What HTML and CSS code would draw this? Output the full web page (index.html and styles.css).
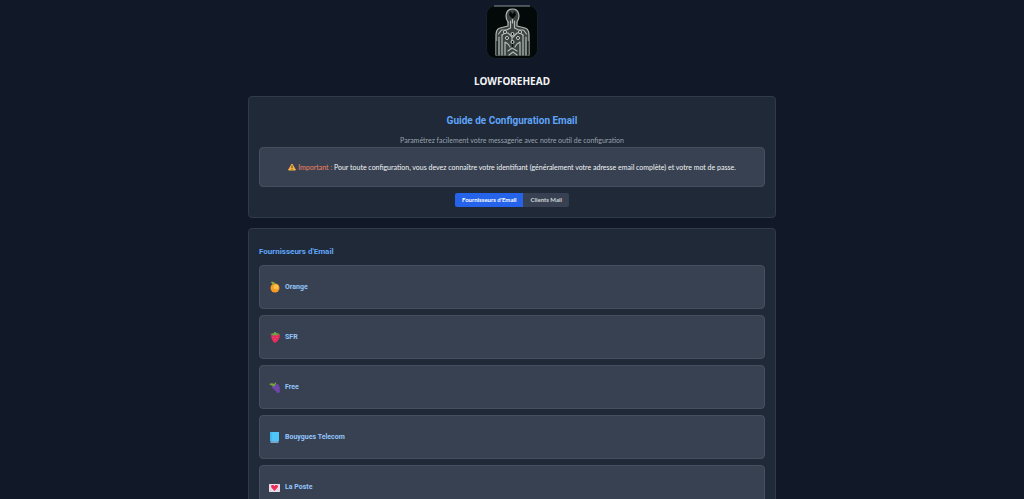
FILE: index.html
```html
<!DOCTYPE html>
<html lang="fr">
<head>
    <meta charset="UTF-8">
    <meta name="viewport" content="width=device-width, initial-scale=1.0">
    <title>Guide de Configuration Email</title>
    <link rel="stylesheet" href="styles.css">
</head>
<body>
    <!-- Header -->
    <header class="header">
        <svg class="logo" viewBox="0 0 52 54" role="img" aria-label="Logo Lowforehead">
            <rect x="0.5" y="0.5" width="51" height="53" rx="9" fill="#020908" stroke="#17212a"/>
            <path d="M8 1h36" stroke="#87929a"/>
            <path d="M22 17c-3-4-3-13 4.500-13s7.500 9 4.500 13v4l8 2c4 1 4 5 4 9v19H10V32c0-4 0-8 4-9l8-2z" fill="#3b4340"/>
            <g fill="none" stroke="#b4bab7" stroke-width="1.200" stroke-linecap="round" stroke-linejoin="round">
                <path d="M22 17c-3-4-3-13 4.500-13s7.500 9 4.500 13v4l8 2c4 1 4 5 4 9v18"/>
                <path d="M22 17v4l-8 2c-4 1-4 5-4 9v18"/>
                <path d="M26.500 12v6M24.500 16v7l-4 2h-5l-3 4M28.500 16v7l4 2h5l3 4"/>
                <path d="M13 32v18M16 30v20M40 32v18M37 30v20"/>
                <path d="M16 30l3-2h3l4 4v5M37 30l-3-2h-3l-4 4"/>
                <path d="M19 50V37l3 2 2 3M34 50V37l-3 2-2 3M22 46l4-3 5 3M23 50l4-3 4 3"/>
            </g>
            <path d="M24 6l2.500 3L29 6l1 4-3.500 4L23 10z" fill="#020908"/>
            <path d="M11 50V36M42 50V36M26.500 38v4" stroke="#020908" stroke-width="1"/>
            <g fill="#020908" stroke="#d0d5d2">
                <circle cx="19" cy="27" r="1.500"/><circle cx="34" cy="27" r="1.500"/>
                <circle cx="21" cy="33" r="1.500"/><circle cx="32" cy="33" r="1.500"/>
                <circle cx="26.500" cy="29" r="1.500"/><circle cx="26.500" cy="37" r="1.500"/>
            </g>
        </svg>
        <h1 class="brand">LOWFOREHEAD</h1>
    </header>

    <main class="container">
        <!-- Intro -->
        <section class="card intro">
            <h2 class="intro-title">Guide de Configuration Email</h2>
            <p class="subtitle">Paramétrez facilement votre messagerie avec notre outil de configuration</p>
            <div class="notice">
                <svg class="warning-icon" viewBox="0 0 16 16" aria-hidden="true">
                    <path d="M8 2L15 14H1Z" fill="#fbb042" stroke="#fbb042" stroke-width="2" stroke-linejoin="round"/>
                    <path d="M8 5v5M8 11.500v2" stroke="#4b4038" stroke-width="2"/>
                </svg>
                <p><span class="important">Important :</span> Pour toute configuration, vous devez connaître votre identifiant (généralement votre adresse email complète) et votre mot de passe.</p>
            </div>
            <div class="tabs">
                <button type="button" class="tab active">Fournisseurs d'Email</button>
                <button type="button" class="tab">Clients Mail</button>
            </div>
        </section>

        <!-- Providers -->
        <section class="card">
            <h3 class="section-title">Fournisseurs d'Email</h3>
            <div class="providers">
                <button type="button" class="provider">
                    <svg class="provider-icon" viewBox="0 0 12 12" aria-hidden="true">
                        <circle cx="6" cy="7" r="4.500" fill="#f99a25"/>
                        <circle cx="7" cy="6" r="2.500" fill="#ffc34c"/>
                        <path d="M5 3L2 1" stroke="#85603b"/>
                        <path d="M2 1c3-1 4 1 4 2-2 1-3 0-4-2z" fill="#86ab3d"/>
                    </svg>
                    <span>Orange</span>
                </button>
                <button type="button" class="provider">
                    <svg class="provider-icon" viewBox="0 0 12 12" aria-hidden="true">
                        <path d="M2 4c2-2 7-2 9 0 0 4-3 7-5 8-2-1-4-4-4-8z" fill="#e42c5c"/>
                        <path d="M1 3l4-1V1h2v1l4 1-3 1v1L6 4 4 5V4z" fill="#68a545"/>
                        <path d="M4 6v1M8 6v1M6 8v1" stroke="#ff86a0" stroke-width="0.500"/>
                    </svg>
                    <span>SFR</span>
                </button>
                <button type="button" class="provider">
                    <svg class="provider-icon" viewBox="0 0 12 12" aria-hidden="true">
                        <g fill="#7145a9">
                            <circle cx="5" cy="6" r="2"/><circle cx="8" cy="5" r="2"/>
                            <circle cx="9" cy="7" r="2"/><circle cx="7" cy="8" r="2"/>
                            <circle cx="9" cy="10" r="2"/>
                        </g>
                        <path d="M0 3c2-1 4-1 5 0l2-2v2L6 4 5 6C4 4 2 5 0 3z" fill="#75a83a"/>
                    </svg>
                    <span>Free</span>
                </button>
                <button type="button" class="provider">
                    <svg class="provider-icon" viewBox="0 0 12 12" aria-hidden="true">
                        <rect x="1" y="1" width="9" height="11" fill="#347fae"/>
                        <rect x="1" y="1" width="9" height="9" fill="#50c5fa"/>
                        <path d="M2 1v9" stroke="#3aabe7"/>
                        <path d="M2 11h7" stroke="#c7c8da"/>
                    </svg>
                    <span>Bouygues Telecom</span>
                </button>
                <button type="button" class="provider">
                    <svg class="provider-icon" viewBox="0 0 12 12" aria-hidden="true">
                        <rect x="0" y="3" width="11" height="8" fill="#e9dce9"/>
                        <path d="M0 3l5 4 6-4M0 11l4-4M11 11L7 7" fill="none" stroke="#cfb7cd" stroke-width="0.500"/>
                        <path d="M5.500 10L2 6c0-3 3-2 3.500-1C6 4 9 3 9 6z" fill="#ef2b59"/>
                    </svg>
                    <span>La Poste</span>
                </button>
            </div>
        </section>
    </main>
</body>
</html>
```

FILE: styles.css
```css
/* Reset and base styles */
* {
    margin: 0;
    padding: 0;
    box-sizing: border-box;
}

html {
    scrollbar-width: none;
}

body {
    background-color: #111827;
    color: #f3f4f6;
    font-family: Lato, "Open Sans", sans-serif;
    font-size: 7px;
    line-height: 12px;
}

button {
    border: none;
    font-family: inherit;
    cursor: pointer;
}

/* Header */
.header {
    display: flex;
    flex-direction: column;
    align-items: center;
    gap: 14px;
    padding: 5px 0 7px;
}

.logo {
    width: 52px;
    height: 54px;
}

.brand {
    font-family: "Noto Sans", "Open Sans", sans-serif;
    font-size: 10px;
    line-height: 16px;
    font-weight: 700;
}

/* Cards */
.container {
    display: flex;
    flex-direction: column;
    gap: 10px;
    max-width: 528px;
    margin: 0 auto;
}

.card {
    padding: 16px 10px 10px;
    background-color: #1f2937;
    border: 1px solid #303b4a;
    border-radius: 4px;
}

/* Intro */
.intro {
    text-align: center;
}

.intro-title {
    color: #60a5fa;
    font-family: Roboto, sans-serif;
    font-size: 10px;
    line-height: 16px;
    margin-bottom: 4px;
}

.subtitle {
    color: #9ca3af;
    line-height: 14px;
}

.notice {
    display: flex;
    justify-content: center;
    align-items: center;
    gap: 2px;
    padding: 13px 10px;
    background-color: #374151;
    border: 1px solid #445060;
    border-radius: 4px;
}

.warning-icon {
    width: 8px;
    height: 8px;
}

.important {
    color: #f5815f;
}

/* Tabs */
.tabs {
    display: flex;
    justify-content: center;
    margin-top: 6px;
}

.tab {
    padding: 0 7px;
    background-color: #374151;
    color: #d1d5db;
    font-size: 6px;
    font-weight: 700;
    line-height: 14px;
    border-radius: 0 2px 2px 0;
}

.tab.active {
    background-color: #2563eb;
    color: #fff;
    border-radius: 2px 0 0 2px;
}

/* Providers */
.section-title {
    color: #60a5fa;
    font-family: Roboto, sans-serif;
    font-size: 8px;
    line-height: 14px;
    margin-bottom: 6px;
}

.providers {
    display: flex;
    flex-direction: column;
    gap: 6px;
}

.provider {
    display: flex;
    align-items: center;
    gap: 4px;
    padding: 15px 9px;
    background-color: #374151;
    border: 1px solid #445060;
    border-radius: 4px;
    color: #93c5fd;
    font-family: Roboto, sans-serif;
    font-size: 7px;
    font-weight: 700;
    line-height: 12px;
    text-align: left;
}

.provider:hover {
    border-color: #60a5fa;
}

.provider-icon {
    width: 12px;
    height: 12px;
}
```
